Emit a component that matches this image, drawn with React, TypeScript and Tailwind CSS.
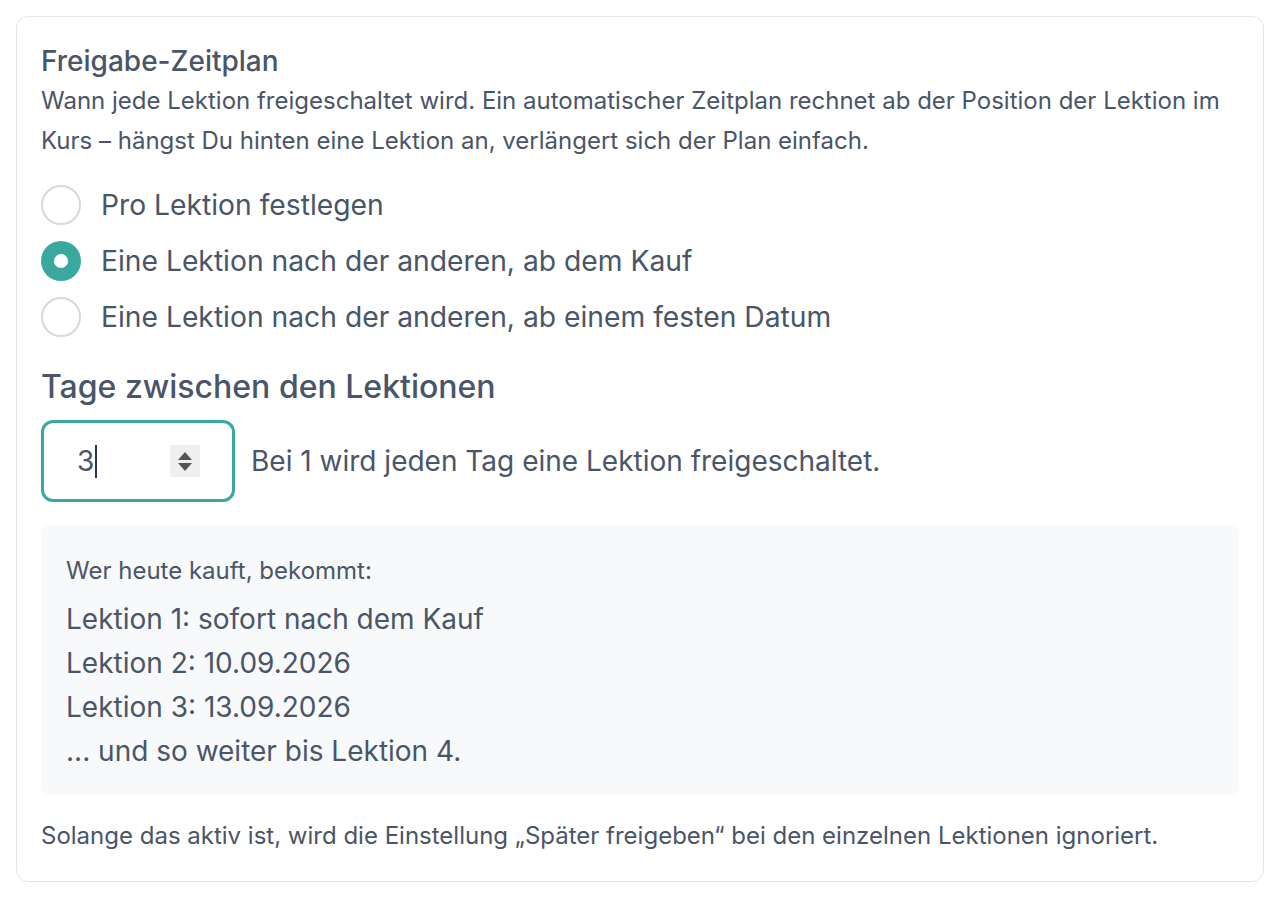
import { useState } from "react";

type Mode = "manual" | "purchase" | "date";

const OPTIONS: { id: Mode; label: string }[] = [
  { id: "manual", label: "Pro Lektion festlegen" },
  { id: "purchase", label: "Eine Lektion nach der anderen, ab dem Kauf" },
  { id: "date", label: "Eine Lektion nach der anderen, ab einem festen Datum" },
];

const Radio = ({ checked }: { checked: boolean }) =>
  checked ? (
    <span className="flex h-10 w-10 shrink-0 items-center justify-center rounded-full bg-[#3aa89e]">
      <span className="h-[14px] w-[14px] rounded-full bg-white" />
    </span>
  ) : (
    <span className="h-10 w-10 shrink-0 rounded-full border-2 border-[#d5dae1] bg-white" />
  );

export default function App() {
  const [mode, setMode] = useState<Mode>("purchase");
  const [days] = useState(3);

  return (
    <div className="min-h-screen bg-white p-4 font-['Inter',sans-serif] text-[#4a5568]">
      <div className="rounded-xl border border-[#e3e6eb] bg-white px-6 pt-6 pb-[29px]">
        <h2 className="text-[28px] leading-10 font-medium">Freigabe-Zeitplan</h2>
        <p className="text-[24px] leading-10">
          Wann jede Lektion freigeschaltet wird. Ein automatischer Zeitplan rechnet ab der Position der Lektion im
          Kurs – hängst Du hinten eine Lektion an, verlängert sich der Plan einfach.
        </p>

        <div className="mt-6 flex flex-col gap-4">
          {OPTIONS.map(o => (
            <label key={o.id} className="flex cursor-pointer items-center gap-5" onClick={() => setMode(o.id)}>
              <Radio checked={mode === o.id} />
              <span className="text-[28.25px] leading-10">{o.label}</span>
            </label>
          ))}
        </div>

        <h3 className="mt-8 text-[32px] leading-9 font-medium">Tage zwischen den Lektionen</h3>

        <div className="mt-[15px] flex items-center gap-4">
          <div className="flex h-[82px] w-[194px] shrink-0 items-center justify-between rounded-xl border-[3px] border-[#3aa89e] bg-white pr-[32px] pl-[33px]">
            <span className="flex items-center text-[28px] leading-8">
              {days}
              <span className="ml-[1px] h-[33px] w-[2px] bg-[#2d3748]" />
            </span>
            <span className="flex h-[32px] w-[30px] flex-col items-center justify-center gap-[3px] bg-[#efefef]">
              <svg width="14" height="8" viewBox="0 0 14 8">
                <path d="M7 0L14 8H0z" fill="#555" />
              </svg>
              <svg width="14" height="8" viewBox="0 0 14 8">
                <path d="M0 0H14L7 8z" fill="#555" />
              </svg>
            </span>
          </div>
          <span className="text-[28px] leading-10">Bei 1 wird jeden Tag eine Lektion freigeschaltet.</span>
        </div>

        <div className="mt-6 rounded-lg bg-[#f7f9fb] px-[25px] pt-[31px] pb-[21px]">
          <p className="text-[24px] leading-7">Wer heute kauft, bekommt:</p>
          <ul className="mt-3 text-[28px] leading-[44px]">
            <li>Lektion 1: sofort nach dem Kauf</li>
            <li>Lektion 2: 10.09.2026</li>
            <li>Lektion 3: 13.09.2026</li>
            <li>... und so weiter bis Lektion 4.</li>
          </ul>
        </div>

        <p className="mt-[26px] text-[24px] leading-8">
          Solange das aktiv ist, wird die Einstellung „Später freigeben“ bei den einzelnen Lektionen ignoriert.
        </p>
      </div>
    </div>
  );
}
